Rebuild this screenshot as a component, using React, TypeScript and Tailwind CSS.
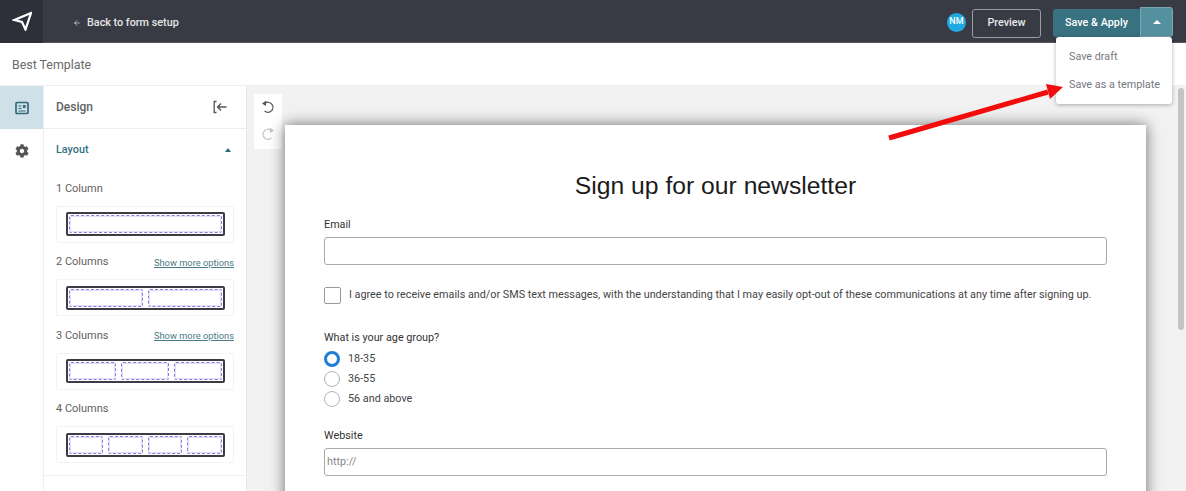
import { ArrowLeft } from 'lucide-react';
import { FaCog } from 'react-icons/fa';

const FONT = "font-['Roboto',sans-serif]";

function LayoutPreview({ cols }: { cols: number }) {
  return (
    <div className="h-[37px] rounded-[2px] border border-[#f3f3f3] flex items-center justify-center">
      <div className="w-[159px] h-[24px] rounded-[2px] border-2 border-[#3c3c46] flex gap-[5px] p-[1px]">
        {Array.from({ length: cols }).map((_, i) => (
          <div key={i} className="flex-1 rounded-[2px] border border-dashed border-[#8f7be0] ring-1 ring-inset ring-[#e2ddf9]" />
        ))}
      </div>
    </div>
  );
}

function LayoutOption({ label, cols, more }: { label: string; cols: number; more?: boolean }) {
  return (
    <div className="mb-[11px]">
      <div className="h-[18px] flex items-center justify-between mb-[7.5px]">
        <span className="text-[11px] text-[#5f5f5f]">{label}</span>
        {more && <span className="text-[9.3px] text-[#4a7a88] underline">Show more options</span>}
      </div>
      <LayoutPreview cols={cols} />
    </div>
  );
}

function Radio({ label, checked }: { label: string; checked?: boolean }) {
  return (
    <div className="h-[20px] flex items-center gap-[8px]">
      {checked ? (
        <div className="w-[16px] h-[16px] rounded-full border-[3px] border-[#1e7fd8] bg-white" />
      ) : (
        <div className="w-[16px] h-[16px] rounded-full border border-[#b5b5b5] bg-white" />
      )}
      <span className="text-[10.8px] text-[#444]">{label}</span>
    </div>
  );
}

export default function App() {
  return (
    <div className={`${FONT} relative w-[1186px] h-[491px] overflow-hidden bg-white`}>
      {/* top bar */}
      <div className="h-[43px] bg-[#383b44] flex items-center border-b border-[#55575c] pt-[4px]">
        <div className="w-[43px] h-[43px] -mt-[4px] bg-[#2d3039] flex items-center justify-center">
          <svg width="20" height="20" viewBox="0 0 20 20" fill="none" stroke="white" strokeWidth="2.2" strokeLinejoin="miter">
            <path d="M19 2 L2.5 9 L10 11 L13.5 18.5 Z" />
          </svg>
        </div>
        <div className="ml-[30px] flex items-center gap-[6px] text-[10.8px] font-medium text-[#e6e6e8]">
          <ArrowLeft size={8} strokeWidth={2} />
          <span>Back to form setup</span>
        </div>
        <div className="ml-auto flex items-center mr-[13px]">
          <div className="w-[19px] h-[19px] -mt-[2px] rounded-full bg-[#1fa9e1] text-white text-[9px] font-medium flex items-center justify-center">NM</div>
          <div className="ml-[6px] w-[69px] h-[29px] rounded-[3px] border border-[#9a9ca3] text-[10.8px] font-medium text-[#e8e8ea] flex items-center justify-center">Preview</div>
          <div className="ml-[12px] w-[87px] h-[28px] rounded-l-[3px] bg-[#38717f] text-[10.8px] font-medium text-white flex items-center justify-center">Save &amp; Apply</div>
          <div className="w-[33px] h-[30px] -mt-[2px] rounded-r-[3px] bg-[#55909e] border border-[#7ba7b3] flex items-center justify-center">
            <div className="w-0 h-0 border-x-[4px] border-x-transparent border-b-[4px] border-b-white" />
          </div>
        </div>
      </div>

      {/* title bar */}
      <div className="h-[43px] flex items-center pl-[12px] pt-[3px] text-[12.4px] text-[#6a6a6a] border-b border-[#f0f0f0]">Best Template</div>

      {/* body */}
      <div className="flex h-[405px]">
        <div className="w-[44px] shrink-0 border-r border-[#eeeeee]">
          <div className="h-[43px] bg-[#cfe0e8] flex items-center justify-center">
            <svg width="14" height="14" viewBox="0 0 14 14" fill="none" stroke="#2f6a7a" strokeWidth="1.7">
              <rect x="1" y="1.5" width="12" height="11" rx="1" />
              <path d="M3.5 5h3M3.5 7.5h3M3.5 10h7" strokeWidth="1.1" />
              <rect x="8" y="4" width="2.6" height="3" fill="#2f6a7a" stroke="none" />
            </svg>
          </div>
          <div className="h-[43px] flex items-center justify-center text-[#555]">
            <FaCog size={14} />
          </div>
        </div>

        <div className="w-[203px] shrink-0 border-r border-[#e8e8e8]">
          <div className="h-[43px] px-[12px] flex items-center justify-between border-b border-[#eeeeee]">
            <span className="text-[12px] font-medium text-[#626262]">Design</span>
            <div className="flex items-center text-[#555] mr-[7px]">
              <svg width="14" height="14" viewBox="0 0 14 14" fill="none" stroke="#555" strokeWidth="1.3">
                <path d="M3.5 1.5H1.2V12.5H3.5" />
                <path d="M13.5 7H4.5M8 3.5L4.5 7L8 10.5" />
              </svg>
            </div>
          </div>
          <div className="h-[40px] px-[12px] pt-[2px] flex items-center justify-between">
            <span className="text-[10.8px] font-medium text-[#35707f]">Layout</span>
            <div className="mr-[3px] w-0 h-0 border-x-[3.5px] border-x-transparent border-b-[4px] border-b-[#2f6a7a]" />
          </div>
          <div className="px-[12px] pt-[11px] pb-[1px] border-b border-[#f0f0f0]">
            <LayoutOption label="1 Column" cols={1} />
            <LayoutOption label="2 Columns" cols={2} more />
            <LayoutOption label="3 Columns" cols={3} more />
            <LayoutOption label="4 Columns" cols={4} />
          </div>
        </div>

        {/* canvas */}
        <div className="flex-1 bg-[#f2f2f2] flex items-start pl-[7px] pt-[8px] overflow-hidden">
          <div className="w-[28px] h-[55px] bg-white flex flex-col items-center pt-[6px] gap-[13px]">
            <svg width="14" height="14" viewBox="0 0 14 14" fill="none" stroke="#555" strokeWidth="1.3">
              <path d="M4 3.2 A5 5 0 1 1 3.6 11" />
              <path d="M1 3.6 L5 0.8 L5 6 Z" fill="#555" stroke="none" />
            </svg>
            <svg width="14" height="14" viewBox="0 0 14 14" fill="none" stroke="#c4c4c4" strokeWidth="1.3">
              <path d="M10 3.2 A5 5 0 1 0 10.4 11" />
              <path d="M13 3.6 L9 0.8 L9 6 Z" fill="#c4c4c4" stroke="none" />
            </svg>
          </div>
          <div className="ml-[3px] mt-[31px] w-[861px] h-[400px] shrink-0 bg-white shadow-[0_0_14px_rgba(0,0,0,0.55)] px-[39px] pt-[46px]">
            <h1 className="text-[24.7px] leading-[30px] text-center text-[#1b1b1b] font-['Liberation_Sans',sans-serif]">Sign up for our newsletter</h1>
            <div className="mt-[16px] text-[10.8px] leading-[16px] text-[#333]">Email</div>
            <div className="mt-[4px] h-[28px] rounded-[3px] border border-[#a9a9a9]" />
            <div className="mt-[21px] h-[18px] flex items-center gap-[8px]">
              <div className="w-[17px] h-[17px] rounded-[2px] border border-[#9a9a9a] shrink-0" />
              <span className="text-[10.8px] text-[#444] whitespace-nowrap">I agree to receive emails and/or SMS text messages, with the understanding that I may easily opt-out of these communications at any time after signing up.</span>
            </div>
            <div className="mt-[26px] text-[10.8px] leading-[16px] text-[#333]">What is your age group?</div>
            <div className="mt-[3px]">
              <Radio label="18-35" checked />
              <Radio label="36-55" />
              <Radio label="56 and above" />
            </div>
            <div className="mt-[19px] text-[10.8px] leading-[16px] text-[#333]">Website</div>
            <div className="mt-[4px] h-[28px] rounded-[3px] border border-[#a9a9a9] flex items-center pl-[2px] text-[10.8px] text-[#888]">http://</div>
          </div>
        </div>
      </div>

      {/* page scrollbar */}
      <div className="absolute right-[2px] top-[88px] w-[6px] h-[242px] rounded-[3px] bg-[#c4c4c4]" />

      {/* save menu */}
      <div className="absolute left-[1056px] top-[37px] w-[116px] h-[67px] bg-white rounded-[3px] shadow-[0_1px_4px_rgba(0,0,0,0.3)] pt-[11px] pl-[13px] text-[10.8px] text-[#757880]">
        <div className="h-[18px] leading-[18px]">Save draft</div>
        <div className="mt-[10px] h-[18px] leading-[18px] whitespace-nowrap">Save as a template</div>
      </div>

      {/* annotation arrow */}
      <svg className="absolute left-[880px] top-[75px]" width="190" height="70" viewBox="0 0 190 70">
        <path d="M9 63 L168 17" stroke="#f20d0d" strokeWidth="5" />
        <path d="M183 12 L166 9 L170 24 Z" fill="#f20d0d" />
      </svg>
    </div>
  );
}
